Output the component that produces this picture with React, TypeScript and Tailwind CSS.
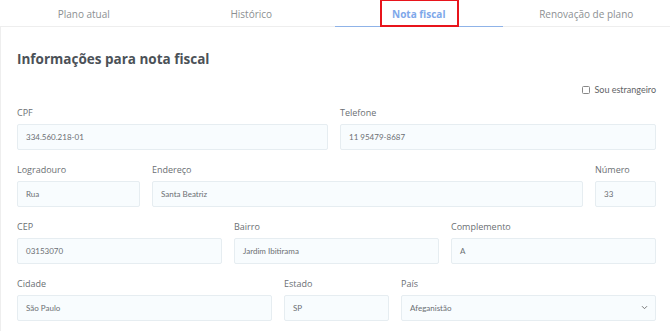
import React from "react";

const Label = ({ children }: { children: React.ReactNode }) => (
  <div className="text-[9px] leading-[11px] text-[#6b6f73] mb-[6px]" style={{ fontFamily: '"Open Sans", sans-serif' }}>
    {children}
  </div>
);

const Field = ({ label, value, select }: { label: string; value: string; select?: boolean }) => (
  <div className="flex flex-col min-w-0">
    <Label>{label}</Label>
    <div className="h-[26px] rounded-[2px] border border-[#e6edf1] bg-[#f8fcfe] flex items-center px-[8px] justify-between">
      <span className="text-[8px] text-[#6b6f73]" style={{ fontFamily: 'Lato, sans-serif' }}>{value}</span>
      {select && (
        <svg width="7" height="5" viewBox="0 0 7 5" className="mr-[-1px]">
          <path d="M1 1.2 L3.5 3.7 L6 1.2" fill="none" stroke="#777" strokeWidth="1" />
        </svg>
      )}
    </div>
  </div>
);

export default function App() {
  const tabs = ["Plano atual", "Histórico", "Nota fiscal", "Renovação de plano"];
  return (
    <div className="w-[670px] h-[331px] bg-white overflow-hidden relative" style={{ fontFamily: '"Open Sans", sans-serif' }}>
      <div className="grid grid-cols-4 h-[27px] border-b border-[#eeeeee]">
        {tabs.map((t, i) => (
          <div key={t} className={"relative flex items-center justify-center pt-[3px] " + (i === 2 ? "border-b-[1.5px] border-[#8fb3e8] -mb-[1px]" : "")}>
            {i === 2 ? (
              <span className="relative text-[10px] font-bold text-[#7ea8ea]">
                {t}
                <span className="absolute -left-[12px] -right-[14px] -top-[8px] -bottom-[5px] border-2 border-[#e8141b]" />
              </span>
            ) : (
              <span className="text-[10px] text-[#8c8f92]">{t}</span>
            )}
          </div>
        ))}
      </div>
      <div className="border-l border-[#eeeeee] h-[304px] pl-[16px] pr-[14px] pt-[23px]">
        <h1 className="text-[13.5px] font-bold text-[#4b5157] leading-[18px]">Informações para nota fiscal</h1>
        <div className="flex justify-end items-center mt-[15px] gap-[4px] pr-0">
          <span className="w-[8px] h-[8px] border border-[#888] rounded-[1.5px]" />
          <span className="text-[9px] text-[#5f6366]" style={{ fontFamily: 'Lato, sans-serif' }}>Sou estrangeiro</span>
        </div>
        <div className="grid grid-cols-[311px_1fr] gap-x-[12px] mt-[10px]">
          <Field label="CPF" value="334.560.218-01" />
          <Field label="Telefone" value="11 95479-8687" />
        </div>
        <div className="grid grid-cols-[123px_1fr_61px] gap-x-[12px] mt-[14px]">
          <Field label="Logradouro" value="Rua" />
          <Field label="Endereço" value="Santa Beatriz" />
          <Field label="Número" value="33" />
        </div>
        <div className="grid grid-cols-3 gap-x-[12px] mt-[14px]">
          <Field label="CEP" value="03153070" />
          <Field label="Bairro" value="Jardim Ibitirama" />
          <Field label="Complemento" value="A" />
        </div>
        <div className="grid grid-cols-[255px_105px_1fr] gap-x-[12px] mt-[14px]">
          <Field label="Cidade" value="São Paulo" />
          <Field label="Estado" value="SP" />
          <Field label="País" value="Afeganistão" select />
        </div>
      </div>
    </div>
  );
}
